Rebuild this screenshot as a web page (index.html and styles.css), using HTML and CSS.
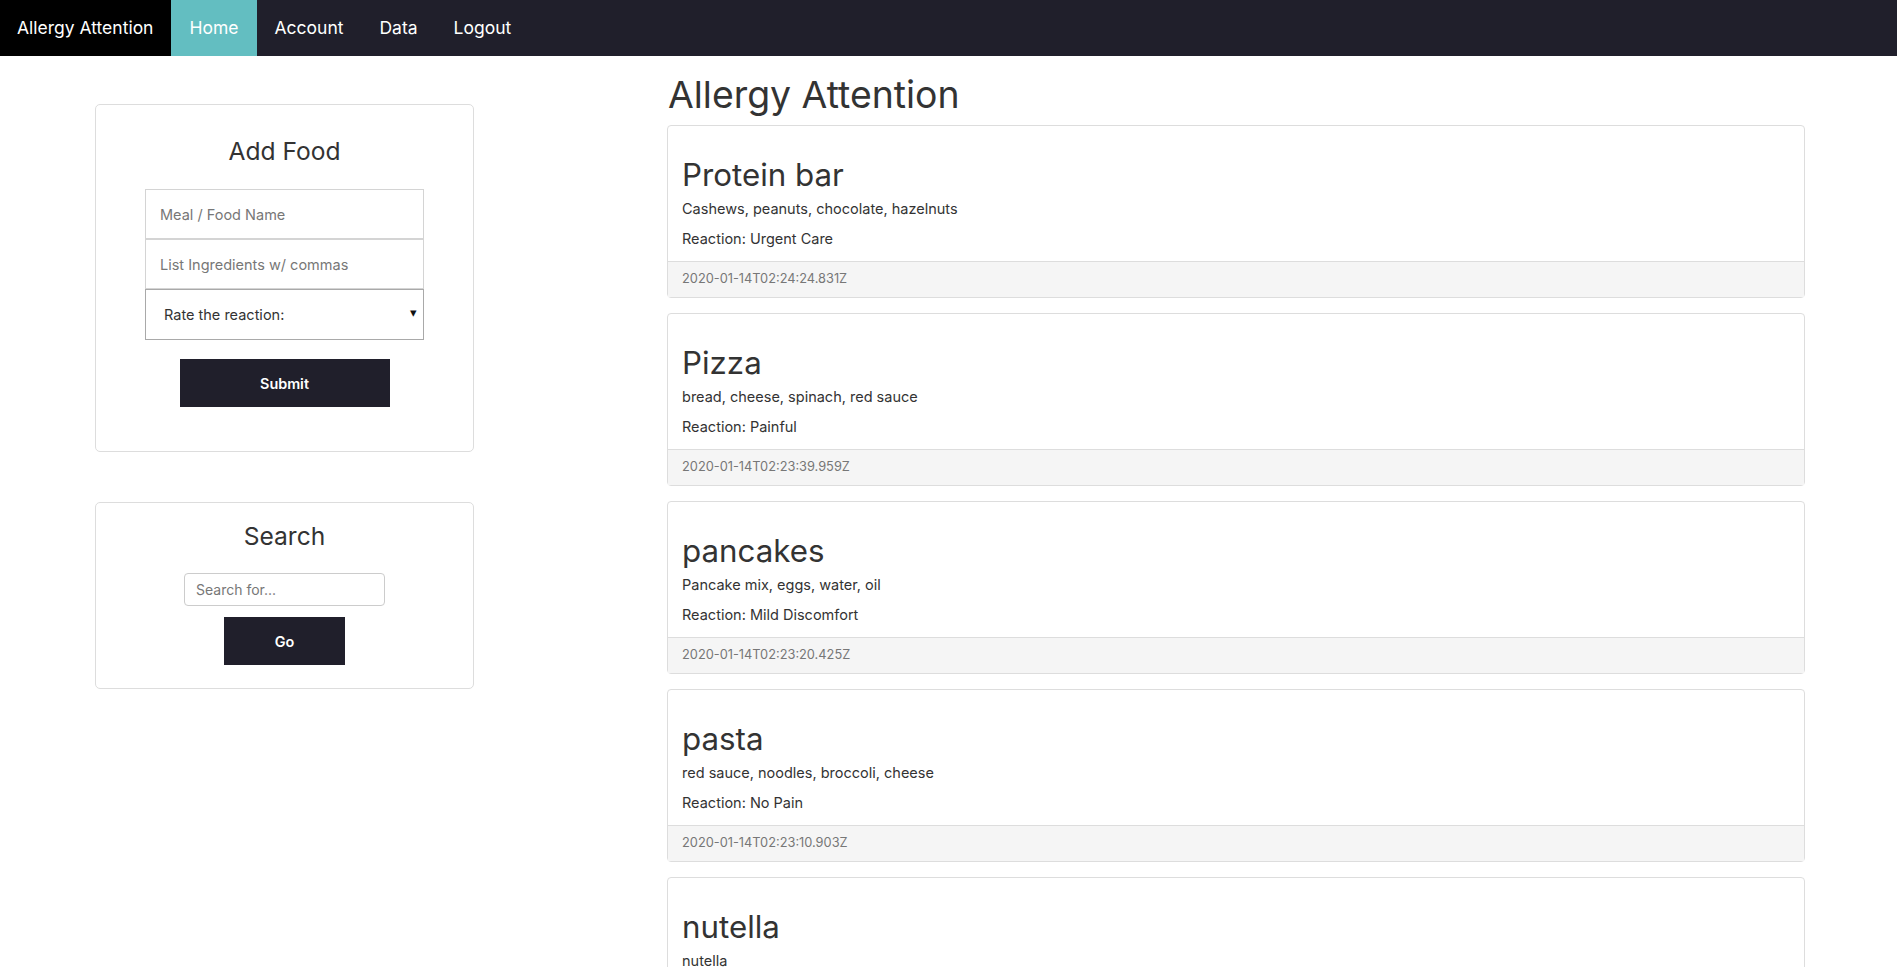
FILE: index.html
```html
<!DOCTYPE html>
<html>
<head>
  <title>Allergy Attention</title>
  <link rel="stylesheet" href="styles.css">
</head>
<body>
  <nav class="navbar">
    <a class="brand" href="#">Allergy Attention</a>
    <ul class="nav-links">
      <li><a class="active" href="#">Home</a></li>
      <li><a href="#">Account</a></li>
      <li><a href="#">Data</a></li>
      <li><a href="#">Logout</a></li>
    </ul>
  </nav>

  <div class="page">
    <aside class="sidebar">
      <div class="panel add-food">
        <h3 class="panel-title">Add Food</h3>
        <form class="food-form">
          <input type="text" class="field" placeholder="Meal / Food Name">
          <input type="text" class="field" placeholder="List Ingredients w/ commas">
          <div class="select-wrap">
            <select class="field select">
              <option>Rate the reaction:</option>
              <option>No Pain</option>
              <option>Mild Discomfort</option>
              <option>Painful</option>
              <option>Urgent Care</option>
            </select>
          </div>
          <button type="button" class="btn-dark submit">Submit</button>
        </form>
      </div>

      <div class="panel search">
        <h3 class="panel-title">Search</h3>
        <input type="text" class="search-input" placeholder="Search for...">
        <button type="button" class="btn-dark go">Go</button>
      </div>
    </aside>

    <main class="feed">
      <h2 class="feed-title">Allergy Attention</h2>

      <div class="card">
        <div class="card-body">
          <h3 class="food-name">Protein bar</h3>
          <p class="ingredients">Cashews, peanuts, chocolate, hazelnuts</p>
          <p class="reaction">Reaction: Urgent Care</p>
        </div>
        <div class="card-footer">2020-01-14T02:24:24.831Z</div>
      </div>

      <div class="card">
        <div class="card-body">
          <h3 class="food-name">Pizza</h3>
          <p class="ingredients">bread, cheese, spinach, red sauce</p>
          <p class="reaction">Reaction: Painful</p>
        </div>
        <div class="card-footer">2020-01-14T02:23:39.959Z</div>
      </div>

      <div class="card">
        <div class="card-body">
          <h3 class="food-name">pancakes</h3>
          <p class="ingredients">Pancake mix, eggs, water, oil</p>
          <p class="reaction">Reaction: Mild Discomfort</p>
        </div>
        <div class="card-footer">2020-01-14T02:23:20.425Z</div>
      </div>

      <div class="card">
        <div class="card-body">
          <h3 class="food-name">pasta</h3>
          <p class="ingredients">red sauce, noodles, broccoli, cheese</p>
          <p class="reaction">Reaction: No Pain</p>
        </div>
        <div class="card-footer">2020-01-14T02:23:10.903Z</div>
      </div>

      <div class="card">
        <div class="card-body">
          <h3 class="food-name">nutella</h3>
          <p class="ingredients">nutella</p>
          <p class="reaction">Reaction: No Pain</p>
        </div>
        <div class="card-footer">2020-01-14T02:22:51.112Z</div>
      </div>
    </main>
  </div>
</body>
</html>
```

FILE: styles.css
```css
body {
  margin: 0;
  font-family: Inter, "Open Sans", sans-serif;
  color: #333;
  background: #fff;
}

/* top bar */
.navbar {
  display: flex;
  height: 56px;
  background-color: #201f2b;
}

.brand,
.nav-links a {
  display: block;
  line-height: 56px;
  font-size: 17.5px;
  color: #fff;
  text-decoration: none;
}

.brand {
  padding: 0 18px 0 17px;
  background-color: #000;
}

.nav-links {
  display: flex;
  margin: 0;
  padding: 0;
  list-style: none;
}

.nav-links a {
  padding: 0 18px;
}

.nav-links a.active {
  background-color: #63bec1;
}

/* layout */
.page {
  display: flex;
  align-items: flex-start;
  padding-left: 95px;
}

.sidebar {
  width: 379px;
  margin-top: 48px;
}

.feed {
  width: 1138px;
  margin-left: 193px;
  padding-top: 18px;
}

/* side panels */
.panel {
  border: 1px solid #ddd;
  border-radius: 5px;
  text-align: center;
}

.add-food {
  padding: 31px 0 44px;
  margin-bottom: 50px;
}

.search {
  padding: 18px 0 23px;
}

.panel-title {
  margin: 0;
  font-size: 24.6px;
  font-weight: 400;
  line-height: 30px;
  color: #333;
}

.food-form {
  display: flex;
  flex-direction: column;
  align-items: center;
  margin-top: 23px;
}

.field {
  box-sizing: border-box;
  width: 279px;
  height: 50px;
  margin: 0;
  padding: 0 14px;
  border: 1px solid #d4d4d4;
  border-radius: 0;
  font-family: inherit;
  font-size: 14.5px;
  color: #333;
  background: #fff;
}

.field::placeholder,
.search-input::placeholder {
  color: #777;
}

.select-wrap {
  position: relative;
}

.select {
  height: 51px;
  padding-left: 18px;
  border-color: #a9a9a9;
  appearance: none;
  -webkit-appearance: none;
}

.select-wrap::after {
  content: "\25BE";
  position: absolute;
  right: 7px;
  top: 15px;
  font-size: 13px;
  color: #111;
  pointer-events: none;
}

.btn-dark {
  border: none;
  border-radius: 0;
  background-color: #201f2b;
  color: #fff;
  font-family: inherit;
  font-size: 14.4px;
  font-weight: 600;
  height: 48px;
  cursor: pointer;
}

.submit {
  width: 210px;
  margin-top: 19px;
}

.search-input {
  display: block;
  box-sizing: border-box;
  width: 201px;
  height: 33px;
  margin: 22px auto 0;
  padding: 0 11px;
  border: 1px solid #ccc;
  border-radius: 4px;
  font-family: inherit;
  font-size: 14px;
  color: #333;
}

.go {
  display: block;
  width: 121px;
  margin: 11px auto 0;
}

/* food entries */
.feed-title {
  margin: 0 0 9px 1px;
  font-size: 37.4px;
  font-weight: 400;
  line-height: 42px;
  color: #333;
}

.card {
  border: 1px solid #ddd;
  border-radius: 4px;
  margin-bottom: 15.5px;
}

.card-body {
  padding: 31px 14px 12px;
}

.food-name {
  margin: 0 0 6px;
  font-size: 31.3px;
  font-weight: 400;
  line-height: 36px;
  color: #333;
}

.ingredients,
.reaction {
  margin: 0;
  font-size: 14.5px;
  line-height: 20px;
}

.ingredients {
  margin-bottom: 10px;
}

.card-footer {
  padding: 0 14px;
  border-top: 1px solid #ddd;
  background-color: #f5f5f5;
  font-size: 12.8px;
  line-height: 34.5px;
  color: #777;
}
```
